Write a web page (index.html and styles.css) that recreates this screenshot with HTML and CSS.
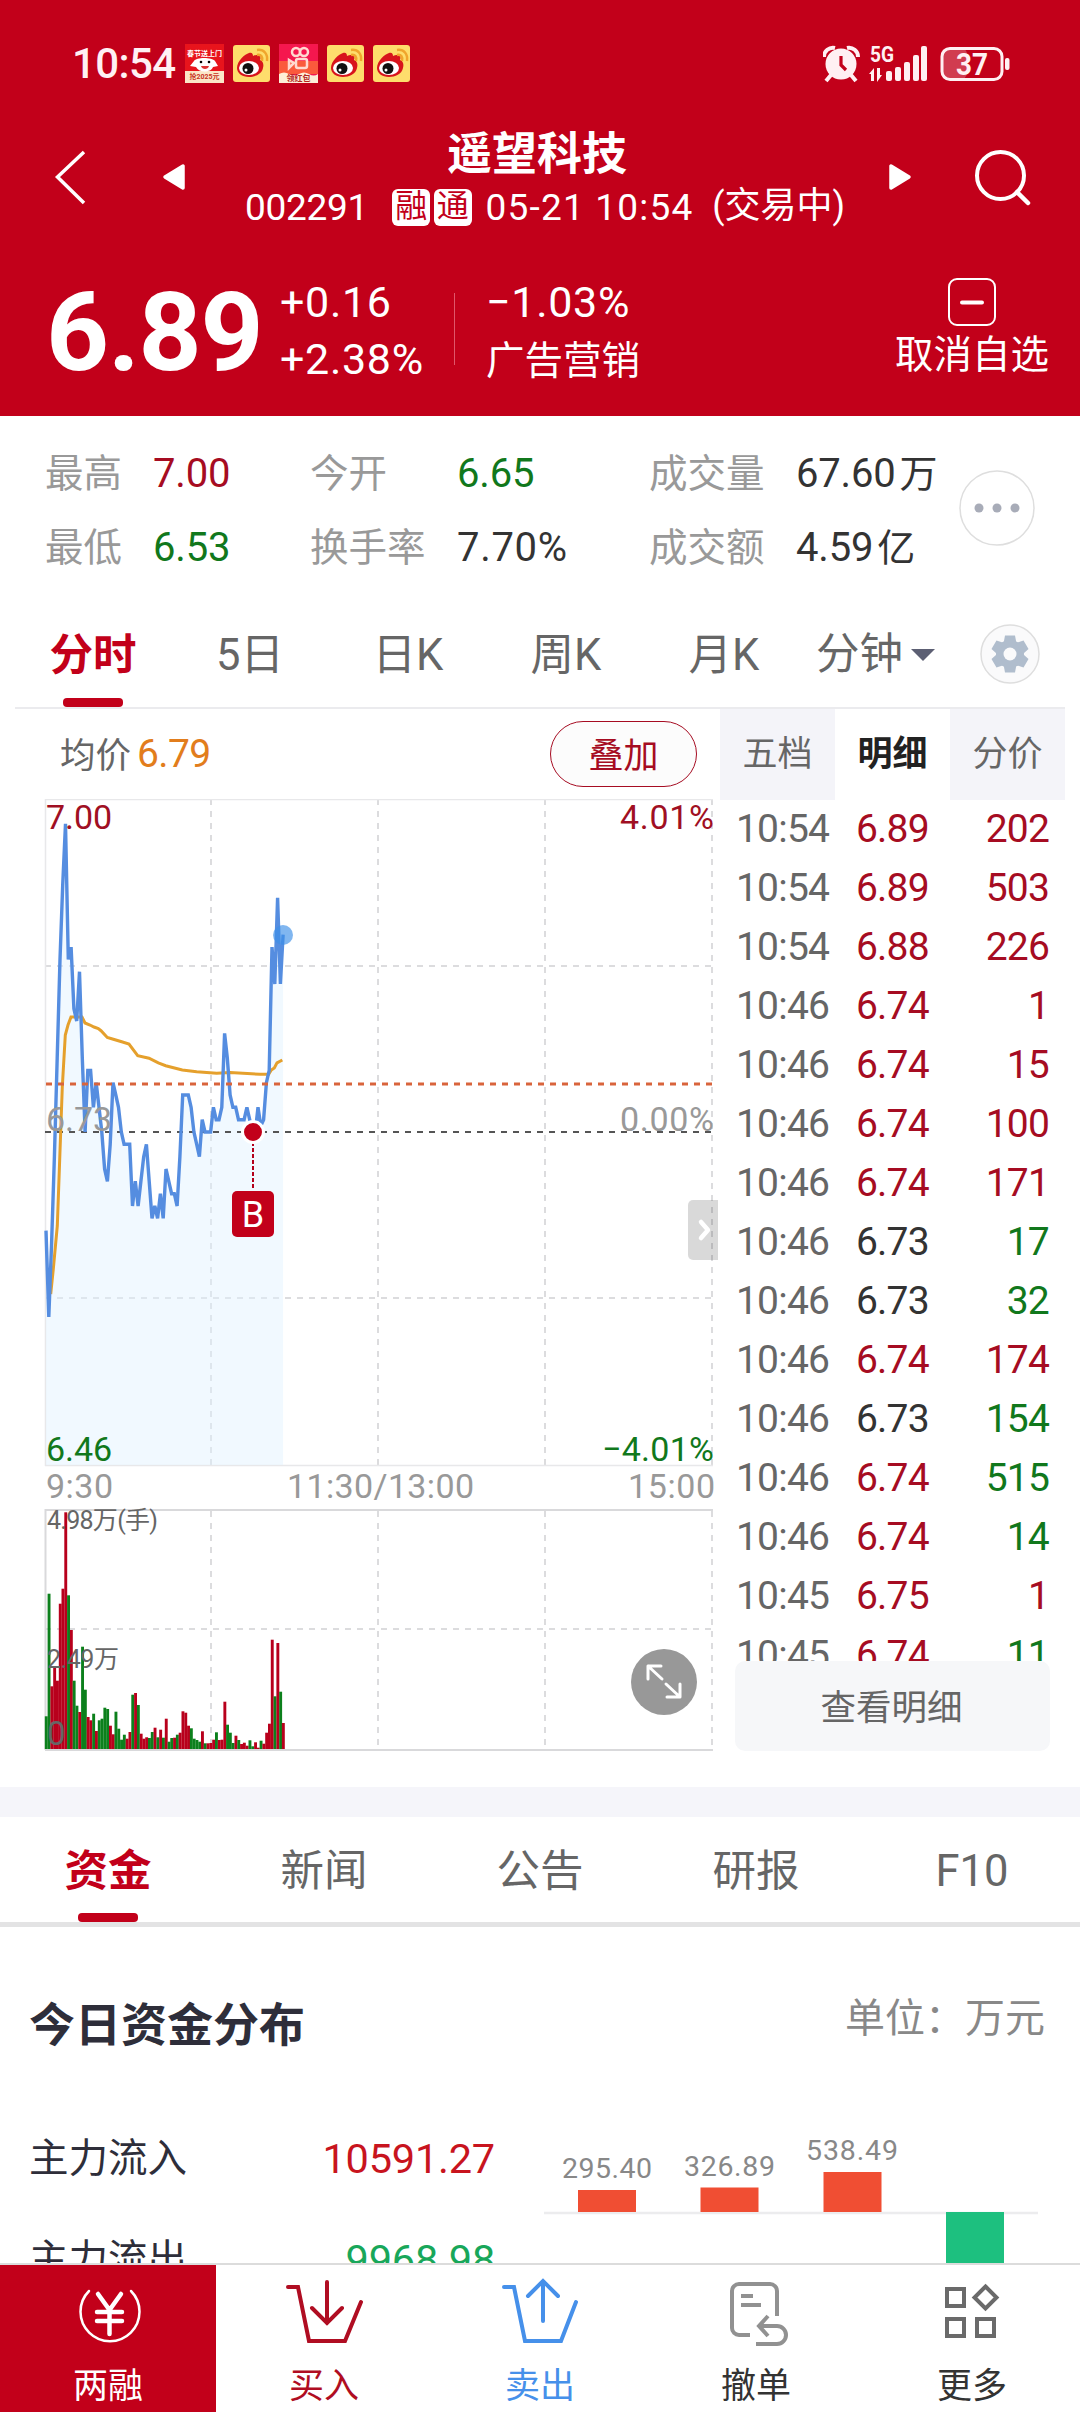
FILE: index.html
```
<!DOCTYPE html>
<html lang="zh-CN">
<head>
    <meta charset="UTF-8">
    <meta name="viewport" content="width=device-width, initial-scale=1.0">
    <title>遥望科技 002291</title>
    <link rel="stylesheet" href="styles.css">
</head>
<body>
    <svg width="0" height="0" class="defs">
        <symbol id="weibo" viewBox="0 0 37 37">
            <rect width="37" height="37" rx="3" fill="#fedd6c"/>
            <path d="M4 23C4 16 12 9 16 8c3-1 4 1 4 3 4-2 9-1 7 4 3 1 4 4 3 8-1 6-8 9-14 9-7 0-12-4-12-9z" fill="#d8141c"/>
            <ellipse cx="16" cy="23" rx="10" ry="7" fill="#fff"/>
            <circle cx="15" cy="23.500" r="5.500" fill="#111"/>
            <circle cx="13" cy="25" r="1.500" fill="#fff"/>
            <path d="M24 10c4-1 6 2 5 6M24 5c7-1 11 4 10 11" fill="none" stroke="#f0a52c" stroke-width="2.500"/>
        </symbol>
    </svg>

    <header class="header">
        <div class="status">
            <span class="clock">10:54</span>
            <svg class="app" viewBox="0 0 39 39" width="39" height="39">
                <rect width="39" height="39" fill="#e8141c"/>
                <rect y="27" width="39" height="12" fill="#fbe6c8"/>
                <path d="M9 17c2-4 18-4 21 0l3 5-5 1c-2 6-14 6-17 0l-6-1z" fill="#fff"/>
                <circle cx="16" cy="18" r="1.300"/><circle cx="24" cy="18" r="1.300"/>
                <path d="M16 22h8c-1 4-7 4-8 0z" fill="#d33"/>
                <text x="19.500" y="12" class="app-text" fill="#fff">春节送上门</text>
                <text x="19.500" y="35" class="app-text" fill="#c8321e">抢2025元</text>
            </svg>
            <svg class="app" width="37" height="37"><use href="#weibo"/></svg>
            <svg class="app" viewBox="0 0 39 39" width="39" height="39">
                <rect width="39" height="39" fill="#f5174e"/>
                <rect y="17" width="39" height="13" fill="#fa5a3c"/>
                <path d="M0 30q5-3 10 0t10 0 10 0 9 0v9H0z" fill="#fdeed8"/>
                <g fill="none" stroke="#ffd9d0" stroke-width="2.500">
                    <circle cx="17" cy="8" r="4"/><circle cx="25" cy="8" r="4"/>
                    <rect x="17" y="15" width="11" height="9" rx="2"/><path d="M15 19l-5-3v8z"/>
                </g>
                <text x="19.500" y="37" class="app-text big" fill="#b4281e">领红包</text>
            </svg>
            <svg class="app" width="37" height="37"><use href="#weibo"/></svg>
            <svg class="app" width="37" height="37"><use href="#weibo"/></svg>
            <svg class="sys" viewBox="0 0 190 40" width="190" height="40">
                <g fill="#fff0f3">
                    <circle cx="18" cy="20" r="15.500"/>
                    <path d="M1 13a9 9 0 0 1 11-9M24 4a9 9 0 0 1 11 9" fill="none" stroke="#fff0f3" stroke-width="4"/>
                    <path d="M8 31l-5 6M28 31l5 6" stroke="#fff0f3" stroke-width="4"/>
                    <path d="M18 12v9l5 5" fill="none" stroke="#c2001a" stroke-width="3.200"/>
                    <text x="47" y="18" class="net" textLength="24" lengthAdjust="spacingAndGlyphs">5G</text>
                    <path d="M46 30l5-6v13h-3v-7zM59 31l-5 7V24h3v7z"/>
                    <rect x="63" y="27" width="6" height="10" rx="2"/>
                    <rect x="72" y="23" width="6" height="14" rx="2"/>
                    <rect x="81" y="18" width="6" height="19" rx="2"/>
                    <rect x="90" y="11" width="6" height="26" rx="2"/>
                    <rect x="98" y="2" width="6" height="35" rx="2"/>
                    <rect x="118" y="4" width="26" height="31" rx="6" opacity=".25"/>
                    <rect x="119" y="4.500" width="60" height="31" rx="8" fill="none" stroke="#fff0f3" stroke-width="3"/>
                    <rect x="182" y="14" width="4.500" height="12" rx="2"/>
                    <text x="133" y="31" class="batt" textLength="32" lengthAdjust="spacingAndGlyphs">37</text>
                </g>
            </svg>
        </div>

        <div class="nav">
            <svg viewBox="0 0 200 60" width="200" height="60">
                <path d="M84 5L57.500 30 84 56" fill="none" stroke="#fff" stroke-width="3.500"/>
                <path d="M165 30l18-11v22z" fill="#fff" stroke="#fff" stroke-width="3.500" stroke-linejoin="round"/>
            </svg>
            <div class="stock">
                <h1>遥望科技</h1>
                <div class="sub">
                    <span class="code">002291</span><i>融</i><i>通</i><span class="date">05-21 10:54</span><span class="state">(交易中)</span>
                </div>
            </div>
            <svg viewBox="880 0 200 60" width="200" height="60">
                <path d="M909 30l-18-11v22z" fill="#fff" stroke="#fff" stroke-width="3.500" stroke-linejoin="round"/>
                <circle cx="1000.500" cy="28.500" r="23.500" fill="none" stroke="#fff" stroke-width="4"/>
                <path d="M1017 45l11 11" stroke="#fff" stroke-width="4.500" stroke-linecap="round"/>
            </svg>
        </div>

        <div class="quote">
            <div class="price">6.89</div>
            <div class="change"><span>+0.16</span><span>+2.38%</span></div>
            <div class="sector"><span>−1.03%</span><span class="zh">广告营销</span></div>
            <div class="fav">
                <svg viewBox="0 0 48 48" width="48" height="48">
                    <rect x="1" y="1" width="46" height="46" rx="8" fill="none" stroke="#fff" stroke-width="2"/>
                    <path d="M14 24.500h20" stroke="#fff" stroke-width="4" stroke-linecap="round"/>
                </svg>
                <span>取消自选</span>
            </div>
        </div>
    </header>

    <section class="stats">
        <div class="stat-grid">
            <span>最高</span><b class="red">7.00</b><span>今开</span><b class="green">6.65</b><span>成交量</span><b>67.60<em>万</em></b>
            <span>最低</span><b class="green">6.53</b><span>换手率</span><b class="wide">7.70%</b><span>成交额</span><b>4.59<em>亿</em></b>
        </div>
        <svg viewBox="0 0 76 76" width="76" height="76">
            <circle cx="38" cy="38" r="37" fill="none" stroke="#dedede" stroke-width="1.500"/>
            <g fill="#a8acb8"><circle cx="20" cy="38" r="4.500"/><circle cx="38" cy="38" r="4.500"/><circle cx="56" cy="38" r="4.500"/></g>
        </svg>
    </section>

    <nav class="periods">
        <span class="active">分时</span><span>5日</span><span>日K</span><span>周K</span><span>月K</span>
        <span class="minute">分钟<svg viewBox="0 0 24 12" width="24" height="12"><path d="M0 0h24L12 12z" fill="#5c5f73"/></svg></span>
        <svg class="gear" viewBox="-30 -30 60 60" width="60" height="60">
            <circle r="29" fill="#fafafb" stroke="#dedede" stroke-width="1.500"/>
            <g fill="#b0bdcd">
                <circle r="14"/>
                <path id="tooth" d="M-5-18.500h10l1.500 8h-13zM-5 18.500h10l1.500-8h-13z"/>
                <use href="#tooth" transform="rotate(60)"/>
                <use href="#tooth" transform="rotate(120)"/>
            </g>
            <circle r="6.500" fill="#fafafb"/>
        </svg>
    </nav>

    <main class="board">
        <div class="left">
            <div class="avg"><span>均价</span><b>6.79</b><button>叠加</button></div>
            <svg class="chart" viewBox="0 799 720 960" width="720" height="960">
                <g class="grid">
                    <path d="M211 799V1466M378 799V1466M545 799V1466M712 799V1466M45 966H712M45 1298H712"/>
                    <path d="M211 1511V1750M378 1511V1750M545 1511V1750M712 1511V1750M45 1629H712"/>
                </g>
                <path d="M45.500 1466V799.500H713M45 1465.500H713" class="frame"/>
                <path d="M45.500 1750V1510H713M45 1750H713" class="frame dark"/>
                <g id="bars"></g>
                <path id="area" fill="#e0f1ff" fill-opacity=".45"/>
                <path d="M45 1132H712" stroke="#555" stroke-width="1.800" stroke-dasharray="6 6"/>
                <polyline class="mean" points="50.700,1294 53.300,1269 57.300,1226 62.300,1087 65.300,1035 68,1025 71,1017 82,1017 85,1023 90,1025 94,1027 98.300,1028.600 101,1030.700 107.300,1037.500 113.300,1039.300 121.700,1041.800 129,1044 137.700,1055.700 149,1058.200 158.300,1062.900 165.700,1065.700 182.300,1070 196.700,1071.800 216.700,1073.200 230,1072.500 260,1074.300 268.700,1074.300 271.300,1070 274.300,1067.900 277,1062.900 282.300,1060"/>
                <path id="line" class="line"/>
                <path d="M46 1084H712" stroke="#d9643c" stroke-width="3" stroke-dasharray="6 6"/>
                <circle cx="283" cy="935" r="10" fill="#3c8fe8" fill-opacity=".65"/>

                <!-- buy marker -->
                <path d="M253 1142v48" stroke="#b4001a" stroke-width="2" stroke-dasharray="4 2"/>
                <circle cx="253" cy="1132" r="10.500" fill="#c2001a" stroke="#fff" stroke-width="3"/>
                <rect x="232" y="1191" width="42" height="46" rx="5" fill="#c2001a"/>
                <text x="253" y="1227" text-anchor="middle" font-size="36" fill="#fff">B</text>

                <g class="axis">
                    <text x="46" y="829" textLength="66" fill="#a00f23">7.00</text>
                    <text x="620" y="829" textLength="94" fill="#a00f23">4.01%</text>
                    <text x="46" y="1131" textLength="66">6.73</text>
                    <text x="620" y="1131" textLength="94">0.00%</text>
                    <text x="46" y="1461" textLength="66" fill="#11781c">6.46</text>
                    <text x="602" y="1461" textLength="112" fill="#11781c">−4.01%</text>
                    <text x="46" y="1498" textLength="67">9:30</text>
                    <text x="287" y="1498" textLength="187">11:30/13:00</text>
                    <text x="628" y="1498" textLength="87">15:00</text>
                </g>
                <g class="vol-label">
                    <text x="47" y="1529" textLength="111">4.98万(手)</text>
                    <text x="47" y="1668" textLength="72">2.49万</text>
                    <text x="47" y="1745" font-size="33">0</text>
                </g>

                <path d="M718 1200h-25a5 5 0 0 0-5 5v50a5 5 0 0 0 5 5h25z" fill="#000" fill-opacity=".15"/>
                <path d="M701 1222l7 8-7 8" class="stroke-white" stroke-width="4.500"/>
                <circle cx="664" cy="1682" r="33" fill="#989898"/>
                <path d="M648 1679v-13h13M648 1666l14 13M680 1684v13h-13M680 1697l-14-13" class="stroke-white" stroke-width="3"/>
            </svg>
        </div>

        <aside class="ticks">
            <div class="tick-tabs"><span>五档</span><span class="on">明细</span><span>分价</span></div>
            <div class="tick-list" id="ticks"></div>
            <button class="more">查看明细</button>
        </aside>
    </main>

    <div class="gap"></div>

    <nav class="tabs"><span class="active">资金</span><span>新闻</span><span>公告</span><span>研报</span><span>F10</span></nav>

    <section class="funds">
        <div class="funds-head"><h2>今日资金分布</h2><span>单位：万元</span></div>
        <div class="funds-body">
            <div class="flows">
                <div><span>主力流入</span><b class="in">10591.27</b></div>
                <div><span>主力流出</span><b class="out">9968.98</b></div>
            </div>
            <svg viewBox="536 2100 544 163" width="544" height="163">
                <path d="M544 2213H1038" stroke="#ececee" stroke-width="2.500"/>
                <g fill="#f04e33">
                    <rect x="578" y="2190" width="58" height="22"/>
                    <rect x="700.500" y="2187.500" width="58" height="24.500"/>
                    <rect x="823.500" y="2172" width="58" height="40"/>
                </g>
                <rect x="946" y="2212" width="58" height="60" fill="#1dc07f"/>
                <g class="bar-label">
                    <text x="562" y="2178" textLength="90">295.40</text>
                    <text x="684" y="2176" textLength="91">326.89</text>
                    <text x="806" y="2160" textLength="92">538.49</text>
                </g>
            </svg>
        </div>
    </section>

    <footer class="actions">
        <div class="margin">
            <svg viewBox="0 0 216 100" fill="none" stroke="#fff" stroke-width="3.500" stroke-linecap="round">
                <path d="M89 26a29.500 29.500 0 1 0 42 0" stroke-width="2.500"/>
                <path d="M98 29l11.500 16L121 29M97 47h25M97 56h25M109.500 45v24" stroke-width="4.500"/>
            </svg>
            <span>两融</span>
        </div>
        <div class="buy">
            <svg viewBox="0 0 216 100" fill="none" stroke="#b00d22" stroke-width="4" stroke-linecap="round">
                <path d="M72 22h10l11 54h36l16-39M111 17v41M96 43l15 15 15-15"/>
            </svg>
            <span>买入</span>
        </div>
        <div class="sell">
            <svg viewBox="0 0 216 100" fill="none" stroke="#4690ea" stroke-width="4" stroke-linecap="round">
                <path d="M72 22h10l11 54h36l15-39M111 56V17M96 31l15-15 15 15"/>
            </svg>
            <span>卖出</span>
        </div>
        <div>
            <svg viewBox="0 0 216 100" fill="none" stroke="#919191" stroke-width="4">
                <path d="M102 70H91a7 7 0 0 1-7-7V26a7 7 0 0 1 7-7h31a7 7 0 0 1 7 7v25M93 31h12M93 40h20"/>
                <path d="M108 79h21a9 9 0 0 0 0-18h-17M120 51l-9 10 9 10"/>
            </svg>
            <span>撤单</span>
        </div>
        <div>
            <svg viewBox="0 0 216 100" fill="none" stroke="#6a6a6a" stroke-width="4">
                <path d="M83 24h17v17H83zM83 54h17v17H83zM113 54h17v17h-17zM121.500 21.500l11 11-11 11-11-11z"/>
            </svg>
            <span>更多</span>
        </div>
    </footer>

    <script>
        // one value per minute from 9:30
        const prices = [
            6.65, 6.58, 6.64, 6.71, 6.79, 6.87, 6.93, 6.98, 6.87, 6.88, 6.83, 6.82, 6.86, 6.79, 6.73,
            6.78, 6.78, 6.75, 6.77, 6.75, 6.73, 6.70, 6.69, 6.72, 6.77, 6.76, 6.75, 6.73, 6.72, 6.72,
            6.72, 6.67, 6.69, 6.67, 6.69, 6.71, 6.72, 6.69, 6.66, 6.67, 6.66, 6.68, 6.66, 6.70, 6.69,
            6.68, 6.68, 6.67, 6.71, 6.76, 6.76, 6.76, 6.75, 6.73, 6.72, 6.71, 6.74, 6.73, 6.73, 6.73,
            6.75, 6.74, 6.74, 6.75, 6.81, 6.79, 6.76, 6.75, 6.75, 6.74, 6.74, 6.74, 6.75, 6.74, 6.73,
            6.73, 6.75, 6.735, 6.74, 6.77, 6.78, 6.88, 6.85, 6.92, 6.85, 6.89
        ];
        // negative = falling minute (green)
        const volumes = [
            -98, -466, 188, 245, 205, 436, 481, 710, -461, 357, -205, -130, 111, -307, -178,
            96, 86, -106, 54, -86, -91, -124, -120, 70, 44, -112, -61, -28, -43, 31,
            51, -163, 168, -132, 46, 31, 35, -33, -51, 64, -35, 58, -34, 91, -22,
            -33, 34, -43, 49, 113, 109, 70, -62, -31, -27, -22, 53, -17, 17, 18,
            28, -50, 27, 28, 142, -73, -49, -18, 40, -27, 15, 19, 10, -26, -8,
            20, 4, -25, 16, 49, 76, 328, -158, 318, -172, 78
        ];
        const step = 2.79;
        const points = prices.map((p, i) => (46 + i * step).toFixed(1) + ' ' + (1132 - (p - 6.73) * 1233).toFixed(1));
        document.getElementById('line').setAttribute('d', 'M' + points.join('L'));
        document.getElementById('area').setAttribute('d', 'M46 1465L' + points.join('L') + 'V1465Z');
        document.getElementById('bars').innerHTML = volumes.map((v, i) => {
            const h = Math.abs(v) / 3;
            return `<rect x="${(44.8 + i * step).toFixed(1)}" y="${(1749 - h).toFixed(1)}" width="2.9" height="${h.toFixed(1)}" fill="${v > 0 ? '#b8001c' : '#0c801c'}"/>`;
        }).join('');

        const ticks = [
            ['10:54', '6.89', 202, 'r'], ['10:54', '6.89', 503, 'r'], ['10:54', '6.88', 226, 'r'],
            ['10:46', '6.74', 1, 'r'], ['10:46', '6.74', 15, 'r'], ['10:46', '6.74', 100, 'r'],
            ['10:46', '6.74', 171, 'r'], ['10:46', '6.73', 17, 'g'], ['10:46', '6.73', 32, 'g'],
            ['10:46', '6.74', 174, 'r'], ['10:46', '6.73', 154, 'g'], ['10:46', '6.74', 515, 'g'],
            ['10:46', '6.74', 14, 'g'], ['10:45', '6.75', 1, 'r'], ['10:45', '6.74', 11, 'g']
        ];
        document.getElementById('ticks').innerHTML = ticks.map(([time, price, vol, side]) =>
            `<div class="tick"><span>${time}</span><span class="${price === '6.73' ? 'flat' : 'red'}">${price}</span><span class="${side === 'r' ? 'red' : 'green'}">${vol}</span></div>`
        ).join('');
    </script>
</body>
</html>
```
FILE: styles.css
```
* {
    box-sizing: border-box;
}
body {
    margin: 0;
    width: 1080px;
    height: 2412px;
    overflow: hidden;
    display: flex;
    flex-direction: column;
    background: #fff;
    color: #333;
    font-family: Roboto, "Noto Sans CJK SC", sans-serif;
}
body > * {
    flex-shrink: 0;
}
svg {
    display: block;
    flex-shrink: 0;
}
.defs {
    position: absolute;
}
h1, h2 {
    margin: 0;
}
b {
    font-weight: 400;
}
em, i {
    font-style: normal;
}
button {
    font-family: inherit;
    padding: 0;
}
.red {
    color: #a60c22;
}
.green {
    color: #11781c;
}
.flat {
    color: #333;
}

/* header */
.header {
    height: 416px;
    background: #c2001a;
    color: #fff;
}
.status {
    height: 122px;
    padding: 5px 67px 0 72px;
    display: flex;
    align-items: center;
}
.clock {
    width: 113px;
    font-size: 42px;
    font-weight: 500;
    letter-spacing: -0.6px;
    color: #fff0f3;
}
.app {
    margin-right: 9px;
}
.app-text {
    font-size: 7px;
    font-weight: 700;
    text-anchor: middle;
}
.app-text.big {
    font-size: 8px;
}
.sys {
    margin-left: auto;
}
.net {
    font-size: 22px;
    font-weight: 700;
}
.batt {
    font-size: 31px;
    font-weight: 700;
}
.nav {
    height: 118px;
    display: flex;
    justify-content: space-between;
}
.nav > svg {
    margin-top: 25px;
}
.stock {
    width: 610px;
}
h1 {
    margin-top: 6px;
    padding-right: 6px;
    height: 53px;
    line-height: 53px;
    font-size: 45px;
    font-weight: 700;
    text-align: center;
}
.sub {
    display: flex;
    align-items: center;
    height: 52px;
    padding-left: 10px;
    font-size: 37px;
    white-space: pre;
}
.code {
    width: 149px;
    letter-spacing: -0.3px;
}
.sub i {
    width: 38px;
    height: 37px;
    margin-right: 4px;
    border-radius: 6px;
    background: #fff;
    color: #c2001a;
    font-size: 32px;
    line-height: 35px;
    text-align: center;
}
.date {
    width: 239px;
    padding-left: 10px;
    letter-spacing: 1.2px;
}
.state {
    font-size: 36px;
    line-height: 48px;
    padding-bottom: 2px;
}
.quote {
    display: flex;
    height: 176px;
    padding-left: 46px;
}
.price {
    width: 234px;
    margin-top: 28px;
    height: 130px;
    line-height: 130px;
    font-size: 110px;
    font-weight: 700;
    letter-spacing: -1.2px;
}
.change,
.sector {
    display: flex;
    flex-direction: column;
    margin-top: 34px;
    font-size: 43px;
    line-height: 57px;
    letter-spacing: 0.7px;
}
.change {
    width: 174px;
}
.sector {
    position: relative;
    padding-left: 32px;
}
.sector::before {
    content: "";
    position: absolute;
    left: 0;
    top: 19px;
    height: 72px;
    border-left: 1px solid #e0566a;
}
.sector .zh {
    font-size: 38.5px;
    letter-spacing: 0;
    padding-top: 1px;
}
.fav {
    margin: 38px 31px 0 auto;
    display: flex;
    flex-direction: column;
    align-items: center;
    font-size: 38.5px;
    line-height: 58px;
}

/* day stats */
.stats {
    height: 184px;
    display: flex;
    padding-left: 45px;
}
.stats > svg {
    margin-top: 54px;
}
.stat-grid {
    width: 914px;
    padding-top: 21px;
    display: grid;
    grid-template-columns: 108px 157px 147px 192px 147px 163px;
    grid-auto-rows: 74px;
    line-height: 74px;
    font-size: 38.5px;
    white-space: nowrap;
}
.stat-grid span {
    color: #999;
}
.stat-grid b {
    font-size: 40px;
    letter-spacing: -0.2px;
}
.stat-grid .wide {
    letter-spacing: 0.7px;
}
.stat-grid em {
    margin-left: 4px;
    font-size: 38px;
}

/* period tabs */
.periods {
    height: 109px;
    margin: 0 15px;
    border-bottom: 2px solid #ebebee;
    display: grid;
    grid-template-columns: 156px 158px 158px 158px 158px 177px 60px;
    align-items: center;
    text-align: center;
    color: #666;
    font-size: 43.5px;
    line-height: 107px;
}
.periods span {
    height: 107px;
    padding-top: 2px;
}
.active {
    position: relative;
    font-weight: 700;
    color: #c2001a;
}
.active::after {
    content: "";
    position: absolute;
    left: calc(50% - 30px);
    bottom: 0;
    width: 60px;
    height: 9px;
    border-radius: 4px;
    background: #c2001a;
}
.minute {
    display: flex;
    align-items: center;
    gap: 8px;
    padding-left: 13px;
}

/* chart and ticks */
.board {
    height: 1078px;
    display: flex;
}
.left {
    width: 720px;
}
.avg {
    height: 90px;
    display: flex;
    align-items: center;
    padding: 0 23px 0 60px;
    font-size: 35.5px;
    color: #666;
}
.avg span {
    padding-bottom: 3px;
}
.avg b {
    margin-left: 6px;
    color: #e27d1c;
    font-size: 39px;
    letter-spacing: -0.6px;
}
.avg button {
    margin-left: auto;
    width: 147px;
    height: 66px;
    padding-bottom: 3px;
    border: 1.5px solid #a60c22;
    border-radius: 33px;
    background: #fcfcfc;
    color: #a60c22;
    font-size: 35px;
}
.grid {
    fill: none;
    stroke: #dcdcde;
    stroke-width: 2;
    stroke-dasharray: 6 6;
}
.frame {
    fill: none;
    stroke: #e8e8ea;
    stroke-width: 1.5;
}
.frame.dark {
    stroke: #d9d9db;
    stroke-width: 2;
}
.line,
.mean {
    fill: none;
    stroke: #558de0;
    stroke-width: 3.4;
}
.mean {
    stroke: #e5a02c;
    stroke-width: 3;
}
.axis {
    font-size: 34px;
    fill: #999;
}
.vol-label {
    font-size: 25px;
    fill: #666;
}
.stroke-white {
    fill: none;
    stroke: #fff;
    stroke-linecap: round;
    stroke-linejoin: round;
}
.ticks {
    width: 345px;
}
.tick-tabs {
    display: grid;
    grid-template-columns: 1fr 1fr 1fr;
    height: 89px;
    line-height: 91px;
    text-align: center;
    font-size: 35px;
    color: #666;
}
.tick-tabs span {
    background: #f4f4f9;
}
.tick-tabs .on {
    background: #fff;
    color: #222;
    font-weight: 700;
}
.tick-list {
    height: 863px;
    padding-top: 2px;
    overflow: hidden;
}
.tick {
    display: grid;
    grid-template-columns: 120px 1fr 80px;
    height: 59px;
    line-height: 59px;
    padding: 0 16px 0 16px;
    font-size: 39px;
    letter-spacing: -0.8px;
    color: #666;
}
.tick span:last-child {
    text-align: right;
}
.more {
    display: block;
    width: 315px;
    height: 90px;
    margin-left: 15px;
    padding: 0 2px 3px 0;
    border: 0;
    border-radius: 10px;
    background: #f6f7f9;
    color: #666;
    font-size: 35.5px;
}

/* lower tabs */
.gap {
    height: 30px;
    background: #f5f5fa;
}
.tabs {
    height: 110px;
    border-bottom: 5px solid #e3e3e4;
    display: grid;
    grid-template-columns: repeat(5, 216px);
    text-align: center;
    line-height: 109px;
    font-size: 43.5px;
    color: #666;
}
.tabs span {
    height: 105px;
}

/* funds */
.funds {
    height: 336px;
    overflow: hidden;
}
.funds-head {
    height: 173px;
    padding: 0 35px 0 29px;
    display: flex;
    justify-content: space-between;
    line-height: 184px;
    font-size: 40px;
    color: #888;
}
h2 {
    line-height: 196px;
    font-size: 46px;
    color: #2e2e3a;
}
.funds-body {
    display: flex;
}
.flows {
    width: 536px;
    padding: 8px 41px 0 29px;
    font-size: 39.5px;
    color: #2e2e3a;
}
.flows div {
    display: flex;
    justify-content: space-between;
    height: 101px;
    line-height: 101px;
}
.flows b {
    font-size: 41.5px;
    letter-spacing: -0.2px;
}
.in {
    color: #c8141e;
}
.out {
    color: #18a75a;
}
.bar-label {
    font-size: 28.5px;
    fill: #888;
}

/* bottom actions */
.actions {
    height: 149px;
    border-top: 2px solid #dcdcdc;
    background: #fff;
    display: grid;
    grid-template-columns: repeat(5, 216px);
    text-align: center;
    font-size: 35px;
    line-height: 43px;
}
.actions svg {
    width: 216px;
    height: 100px;
}
.margin {
    background: #c2001a;
    color: #fff;
}
.buy {
    color: #b00d22;
}
.sell {
    color: #4690ea;
}
```
